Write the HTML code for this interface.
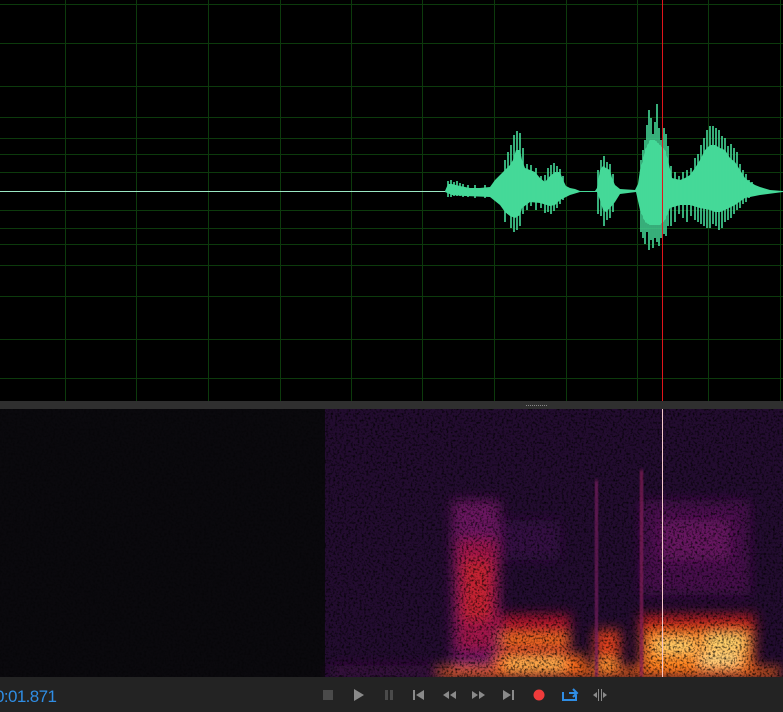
<!DOCTYPE html>
<html><head><meta charset="utf-8"><style>
html,body{margin:0;padding:0;background:#000;width:783px;height:712px;overflow:hidden}
#tb{position:absolute;left:0;top:677px;width:783px;height:35px;background:#232323}
#t{position:absolute;left:-5px;top:687px;font:17px "Liberation Sans",sans-serif;color:#2f8de4;letter-spacing:-0.6px}
</style></head><body>
<svg width="783" height="712" style="position:absolute;left:0;top:0">
<defs>
<filter id="b4" x="-20%" y="-20%" width="140%" height="140%"><feGaussianBlur stdDeviation="6"/></filter>
<filter id="b2"><feGaussianBlur stdDeviation="1.5"/></filter>
<filter id="n" x="0" y="0" width="100%" height="100%"><feTurbulence type="fractalNoise" baseFrequency="0.45" numOctaves="2" seed="3"/><feColorMatrix values="0 0 0 0 0  0 0 0 0 0  0 0 0 0 0  2.2 0 0 0 -1.0"/></filter>
</defs>
<rect x="0" y="0" width="783" height="401" fill="#000"/>
<g stroke="#0c3a0c" stroke-width="1">
<path d="M65.5 0V401M136.5 0V401M208.5 0V401M280.5 0V401M351.5 0V401M422.5 0V401M494.5 0V401M566.5 0V401M637.5 0V401M708.5 0V401M780.5 0V401"/>
<path d="M0 4.5H783M0 43.5H783M0 86.5H783M0 117.5H783M0 138.5H783M0 154.5H783M0 172.5H783M0 210.5H783M0 228.5H783M0 244.5H783M0 265.5H783M0 296.5H783M0 339.5H783M0 378.5H783"/>
</g>
<path d="M0 191.5H783" stroke="#9be8c4" stroke-width="1"/>
<polygon fill="#45d998" points="445,191 448,184 452,184 456,185 460,186 465,187 470,188 480,188 490,187 495,180 500,175 505,170 510,165 513,160 516,150 520,150 522,160 525,168 530,170 535,172 540,178 545,182 550,176 555,172 560,172 563,180 566,186 570,188 575,189 580,191 595,191 597,188 600,170 603,166 606,168 610,170 612,178 615,185 620,189 635,190 638,184 640,170 643,160 645,150 650,140 655,140 660,145 665,150 668,160 672,178 680,180 685,178 690,175 695,168 700,160 705,150 710,145 715,145 720,148 725,150 730,158 735,162 740,170 745,178 750,182 755,185 760,187 770,190 783,191 783,192 760,195 745,198 735,205 725,210 720,212 715,212 710,210 700,208 690,205 680,205 670,208 665,220 660,225 655,225 650,225 645,222 640,210 636,192 620,194 615,202 610,208 606,212 603,210 600,200 597,192 580,192 570,195 560,200 555,205 550,206 540,203 530,202 522,208 520,215 515,218 510,216 505,212 500,205 490,197 465,196 452,195 445,192"/>
<g stroke="#45d998" stroke-width="1.6">
<path d="M502 176V204M505 160V222M508 152V214M511 145V228M514 135V232M517 131V230M520 133V226M523 148V214M527 164V210M531 165V206M536 168V210M541 176V208M545 175V213M548 168V212M551 165V214M554 163V211M557 166V208M560 169V204M563 176V200M598 170V214M601 160V216M604 156V226M607 162V220M610 164V218M613 174V212M641 160V232M643 150V238M645 140V244M647 125V232M649 110V250M651 118V240M653 134V248M655 122V238M657 104V242M659 128V246M661 140V238M664 128V234M666 134V236M668 146V226M671 166V226M675 172V222M679 176V214M683 172V218M687 170V222M691 168V216M695 158V220M698 154V222M701 145V224M704 138V226M707 130V228M710 126V228M713 126V224M716 128V226M719 130V230M722 136V228M725 138V222M728 146V220M731 144V218M734 148V214M737 152V210M740 164V208M743 170V204M746 174V202M749 180V198M752 182V196"/>
<path d="M448 181V197M451 180V197M454 182V196M457 181V196M460 183V196M463 184V197M468 185V197M475 185V198M485 185V198"/>
</g>
<path d="M662.5 0V401" stroke="#e0151b" stroke-width="1"/>
<rect x="0" y="401" width="783" height="8" fill="#2f2f2f"/>
<path d="M526 405.5h22" stroke="#888" stroke-width="1" stroke-dasharray="1 1"/>
<!-- spectrogram -->
<rect x="0" y="409" width="783" height="268" fill="#0a090d"/>
<rect x="325" y="409" width="458" height="268" fill="#230c30"/>
<g filter="url(#b4)">
<rect x="452" y="500" width="48" height="177" fill="#6a1760"/>
<rect x="458" y="540" width="38" height="110" fill="#a0184a"/>
<rect x="462" y="560" width="30" height="60" fill="#c42030"/>
<rect x="500" y="520" width="60" height="40" fill="#3a1048" opacity="0.8"/>
<rect x="500" y="615" width="70" height="40" fill="#b5182c"/>
<rect x="500" y="635" width="68" height="10" fill="#ff7a1a"/>
<rect x="495" y="655" width="90" height="20" fill="#ff6a18"/>
<rect x="505" y="660" width="60" height="14" fill="#ffce60"/>
<rect x="595" y="630" width="25" height="47" fill="#e0401c"/>
<rect x="598" y="660" width="18" height="14" fill="#ffb040"/>
<rect x="640" y="500" width="110" height="95" fill="#4a1250" opacity="0.9"/>
<rect x="660" y="520" width="70" height="40" fill="#6e1866" opacity="0.8"/>
<rect x="640" y="615" width="115" height="62" fill="#c8231f"/>
<rect x="645" y="632" width="105" height="40" fill="#ff8a22"/>
<rect x="655" y="640" width="40" height="12" fill="#ffd870"/>
<rect x="705" y="635" width="40" height="15" fill="#ffd870"/>
<rect x="700" y="655" width="40" height="10" fill="#ffe890"/>
<rect x="440" y="668" width="340" height="9" fill="#ff6a18"/>
<rect x="330" y="665" width="110" height="12" fill="#3a0f40"/>
</g>
<rect x="325" y="409" width="458" height="268" filter="url(#n)" fill="#000"/>
<rect x="0" y="409" width="325" height="268" filter="url(#n)" fill="#000" opacity="0.4"/>
<rect x="595" y="480" width="3" height="197" fill="#7a1a60" filter="url(#b2)"/>
<rect x="640" y="470" width="3" height="207" fill="#8a1a58" filter="url(#b2)"/>
<path d="M662.5 409V677" stroke="#f4c8c8" stroke-width="1"/>
</svg>
<div id="tb"></div>
<div id="t">0:01.871</div>
<svg width="783" height="35" style="position:absolute;left:0;top:677px">
<g transform="translate(0,18)">
<rect x="323" y="-5" width="10" height="10" fill="#4a4a4a"/>
<path d="M354-6L364 0L354 6Z" fill="#8a8a8a"/>
<rect x="385" y="-5" width="3" height="10" fill="#4a4a4a"/><rect x="390" y="-5" width="3" height="10" fill="#4a4a4a"/>
<rect x="413" y="-5" width="2" height="10" fill="#8a8a8a"/><path d="M424-5L416 0L424 5Z" fill="#8a8a8a"/>
<path d="M449-4L443 0L449 4ZM456-4L450 0L456 4Z" fill="#8a8a8a"/>
<path d="M472-4L478 0L472 4ZM479-4L485 0L479 4Z" fill="#8a8a8a"/>
<path d="M503-5L511 0L503 5Z" fill="#8a8a8a"/><rect x="512" y="-5" width="2" height="10" fill="#8a8a8a"/>
<circle cx="539" cy="0" r="5.5" fill="#ef3b3b"/>
<path d="M563-3V5H576V0" stroke="#2f8de4" stroke-width="2" fill="none"/><path d="M569-2H576M573-6L577-2L573 2" stroke="#2f8de4" stroke-width="2" fill="none"/>
<path d="M598.5-6V6M601.5-6V6" stroke="#8a8a8a" stroke-width="1"/><path d="M597-3L593 0L597 3ZM603-3L607 0L603 3Z" fill="#8a8a8a"/>
</g>
</svg>
</body></html>
